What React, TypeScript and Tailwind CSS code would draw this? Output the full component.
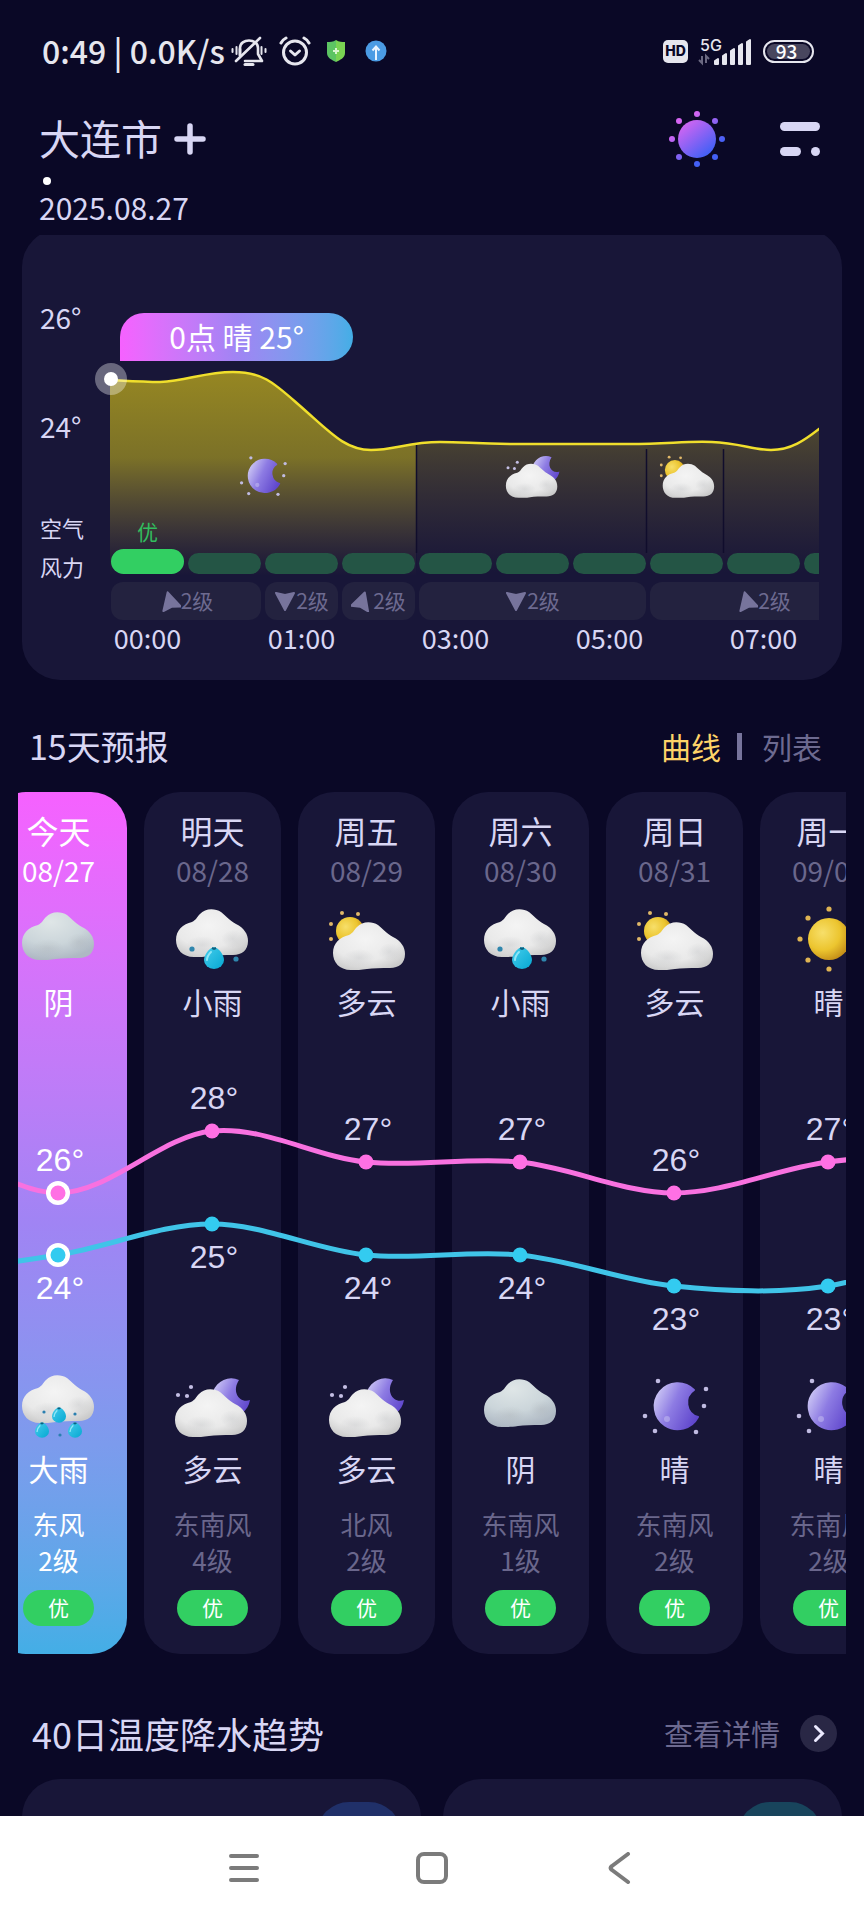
import React from 'react';

type Weather = 'overcast' | 'lightRain' | 'heavyRain' | 'partlySunny' | 'sunny' | 'cloudyNight' | 'clearNight';

interface Day {
  name: string;
  date: string;
  day: Weather;
  dayText: string;
  night: Weather;
  nightText: string;
  wind: string;
  level: string;
  high: number;
  low: number;
}

const days: Day[] = [
  { name: '今天', date: '08/27', day: 'overcast', dayText: '阴', night: 'heavyRain', nightText: '大雨', wind: '东风', level: '2级', high: 26, low: 24 },
  { name: '明天', date: '08/28', day: 'lightRain', dayText: '小雨', night: 'cloudyNight', nightText: '多云', wind: '东南风', level: '4级', high: 28, low: 25 },
  { name: '周五', date: '08/29', day: 'partlySunny', dayText: '多云', night: 'cloudyNight', nightText: '多云', wind: '北风', level: '2级', high: 27, low: 24 },
  { name: '周六', date: '08/30', day: 'lightRain', dayText: '小雨', night: 'overcast', nightText: '阴', wind: '东南风', level: '1级', high: 27, low: 24 },
  { name: '周日', date: '08/31', day: 'partlySunny', dayText: '多云', night: 'clearNight', nightText: '晴', wind: '东南风', level: '2级', high: 26, low: 23 },
  { name: '周一', date: '09/01', day: 'sunny', dayText: '晴', night: 'clearNight', nightText: '晴', wind: '东南风', level: '2级', high: 27, low: 23 },
];

const hours = ['00:00', '', '01:00', '', '03:00', '', '05:00', '', '07:00', ''];

const winds = [
  { span: 'col-span-2', angle: -15 },
  { span: 'col-span-1', angle: 180 },
  { span: 'col-span-1', angle: 18 },
  { span: 'col-span-3', angle: 180 },
  { span: 'col-span-3', angle: -15 },
];

const CLOUD =
  'M18 48C6 48 0 40 0 31C0 21 7 15 16 13C20 11 21 8 24 5C29-1 39-1 45 3C50 7 53 11 60 15C68 19 72 25 72 32C72 41 66 46 57 46C48 46 40 46 34 47C28 48 24 48 18 48Z';

// Gradients shared by every weather icon
const IconDefs = () => (
  <svg width="0" height="0" className="absolute" aria-hidden="true">
    <defs>
      <radialGradient id="cloudWhite" cx="0.45" cy="0.35" r="0.7">
        <stop offset="0" stopColor="#f4f4f4" />
        <stop offset="0.65" stopColor="#e9e9e9" />
        <stop offset="1" stopColor="#cacaca" />
      </radialGradient>
      <radialGradient id="cloudGrey" cx="0.4" cy="0.2" r="0.8">
        <stop offset="0" stopColor="#dfe6e7" />
        <stop offset="0.6" stopColor="#cbd5da" />
        <stop offset="1" stopColor="#aeb8c3" />
      </radialGradient>
      <radialGradient id="cloudShade">
        <stop offset="0" stopColor="#9a9da2" stopOpacity="0.2" />
        <stop offset="1" stopColor="#9a9da2" stopOpacity="0" />
      </radialGradient>
      <radialGradient id="sunFill" cx="0.35" cy="0.35" r="0.75">
        <stop offset="0" stopColor="#f7df6a" />
        <stop offset="0.55" stopColor="#ecc52f" />
        <stop offset="1" stopColor="#bd8414" />
      </radialGradient>
      <linearGradient id="moonFill" x1="0" y1="0.2" x2="1" y2="0.7">
        <stop offset="0" stopColor="#cfcaf5" />
        <stop offset="0.45" stopColor="#8d7be3" />
        <stop offset="1" stopColor="#5f46cc" />
      </linearGradient>
      <linearGradient id="dropFill" x1="0" y1="0" x2="1" y2="1">
        <stop offset="0" stopColor="#45cdec" />
        <stop offset="1" stopColor="#06a8d2" />
      </linearGradient>
    </defs>
  </svg>
);

const Cloud = ({ x, y, grey = false }: { x: number; y: number; grey?: boolean }) => (
  <g transform={`translate(${x} ${y})`}>
    <path d={CLOUD} fill={grey ? 'url(#cloudGrey)' : 'url(#cloudWhite)'} />
    <ellipse cx="26" cy="36" rx="16" ry="9" fill="url(#cloudShade)" />
    <ellipse cx="57" cy="30" rx="12" ry="9" fill="url(#cloudShade)" />
  </g>
);

const Drop = ({ x, y, s }: { x: number; y: number; s: number }) => (
  <g transform={`translate(${x} ${y}) scale(${s})`}>
    <path d="M0-11C5-10 10-3 10 2A10 9 0 0 1-10 2C-10-3-5-10 0-11Z" fill="url(#dropFill)" />
    <path d="M-3-6C-6-3-7 0-7 2" stroke="#8fe6f6" strokeWidth="2" fill="none" strokeLinecap="round" />
    <path d="M-2-10L0-9L2-10" stroke="#0d5f7d" strokeWidth="2" fill="none" />
  </g>
);

const Dots = ({ at, r, fill }: { at: number[][]; r: number; fill: string }) => (
  <>
    {at.map(([x, y]) => (
      <circle key={`${x}-${y}`} cx={x} cy={y} r={r} fill={fill} />
    ))}
  </>
);

const WeatherIcon = ({ type, className }: { type: Weather; className: string }) => (
  <svg viewBox="0 0 84 84" className={className} aria-hidden="true">
    {type === 'overcast' && <Cloud x={5} y={16} grey />}
    {type === 'lightRain' && (
      <>
        <Cloud x={5} y={13} />
        <Drop x={43} y={62} s={1} />
        <Dots at={[[21, 53], [65, 63]]} r={2.6} fill="#2f86ad" />
      </>
    )}
    {type === 'heavyRain' && (
      <>
        <Cloud x={5} y={12} />
        <Drop x={42} y={52} s={0.7} />
        <Drop x={25} y={67} s={0.7} />
        <Drop x={58} y={67} s={0.7} />
        <Dots at={[[27, 49], [58, 51], [43, 72]]} r={1.6} fill="#2a7fb0" />
      </>
    )}
    {type === 'partlySunny' && (
      <>
        <circle cx="25" cy="35" r="14" fill="url(#sunFill)" />
        <Dots at={[[6, 28], [17, 17], [33, 18], [6, 43]]} r={2} fill="#e0b868" />
        <Cloud x={8} y={26} />
      </>
    )}
    {type === 'sunny' && (
      <>
        <circle cx="42" cy="43" r="21" fill="url(#sunFill)" />
        <Dots at={[[42, 13], [21, 22], [13, 43], [21, 64], [42, 73], [63, 64], [71, 43], [63, 22]]} r={2.6} fill="#dfb453" />
      </>
    )}
    {type === 'cloudyNight' && (
      <>
        <path d="M68 17A19 19 0 1 0 79 37C69 41 60 29 68 17Z" fill="url(#moonFill)" />
        <Dots at={[[20, 24], [7, 32], [16, 33]]} r={2.1} fill="#c4bfe4" />
        <Cloud x={4} y={26} />
      </>
    )}
    {type === 'clearNight' && (
      <>
        <path d="M61 27A23 23 0 1 0 65 54A15 15 0 0 1 61 27Z" fill="url(#moonFill)" stroke="url(#moonFill)" strokeWidth="2" strokeLinejoin="round" />
        <circle cx="34" cy="56" r="3" fill="#c9c4f2" opacity="0.5" />
        <Dots at={[[25, 18], [73, 26], [71, 43], [12, 53], [22, 68], [63, 69]]} r={2.3} fill="#c0bbe2" />
      </>
    )}
  </svg>
);

const StatusBar = () => (
  <div className="flex h-[104px] items-center justify-between pl-[42px] pr-[50px] text-[#e6e6ee]">
    <div className="flex h-[102px] items-center self-start">
      <span className="pb-0.5 text-[32px] leading-10 font-medium">0:49 | 0.0K/s</span>
      <svg width="36" height="32" viewBox="0 0 36 32" fill="none" stroke="currentColor" strokeWidth="2.6" strokeLinecap="round" className="ml-1.5">
        <path d="M9 21V13C9 3 27 3 27 13V19L31 26H14" strokeLinejoin="round" />
        <path d="M5 26L29 3" />
        <path d="M9 14V20" />
        <path d="M14 29.500H22" strokeWidth="3" />
        <path d="M5.500 12V19M1.500 14V17M30.500 12V19M34.500 14V17" strokeWidth="2" />
      </svg>
      <svg width="32" height="30" viewBox="0 0 32 30" fill="none" stroke="currentColor" strokeWidth="3" strokeLinecap="round" className="ml-3">
        <circle cx="16" cy="16.500" r="11.500" />
        <path d="M11.500 15L16 19L20.500 15" strokeLinejoin="round" />
        <path d="M2 7C3 5 5 3 7 2M30 7C29 5 27 3 25 2" />
      </svg>
      <svg width="20" height="24" viewBox="0 0 20 24" className="ml-[15px]">
        <path d="M10 1C7 3 4 3 1 3V14C1 19 6 21 10 23Z" fill="#5cc463" />
        <path d="M10 1C13 3 16 3 19 3V14C19 19 14 21 10 23Z" fill="#79d352" />
        <path d="M10 9V15M7 12H13" stroke="#d8f5cf" strokeWidth="2" />
      </svg>
      <svg width="22" height="22" viewBox="0 0 22 22" className="ml-[19px]">
        <circle cx="11" cy="11" r="10.500" fill="#4b9be4" />
        <path d="M11 20V7M7.500 10.500L11 6.500L14.500 10.500" stroke="#e8f3ff" strokeWidth="2" fill="none" />
      </svg>
    </div>
    <div className="flex h-[102px] items-center self-start">
      <span className="flex h-[23px] w-[25px] items-center justify-center rounded-[5px] bg-[#e6e6ee] font-['Inter'] text-[14px] leading-4 font-extrabold text-[#0a0826]">
        HD
      </span>
      <svg width="54" height="36" viewBox="0 -4 54 36" className="ml-2.5">
        <text x="2" y="14" fill="#e6e6ee" fontSize="16" fontWeight="500" fontFamily="Inter, sans-serif">5G</text>
        <path d="M4 19V26L1 23M8 26V19L11 22" stroke="#6b6982" strokeWidth="2" fill="none" />
        <path d="M17 24L20 22V27H17ZM25 19L28 17V27H25ZM33 14L36 12V27H33ZM41 9L44 7V27H41ZM49 5L52 3V27H49Z" fill="#e6e6ee" stroke="#e6e6ee" strokeWidth="2" strokeLinejoin="round" />
      </svg>
      <span className="ml-[11px] flex h-[23px] w-[51px] rounded-full border-2 border-[#e6e6ee] p-0.5">
        <span className="flex w-full items-center justify-center rounded-full bg-[#48465e] pr-1 text-[19px] leading-4 font-medium text-white">93</span>
      </span>
    </div>
  </div>
);

const Header = () => (
  <header className="pl-[39px] pr-11">
    <div className="flex h-[70px] items-center justify-between">
      <h1 className="flex items-center text-[#d8d6f4]">
        <span className="pb-1 text-[41px] leading-[56px]">大连市</span>
        <button type="button" aria-label="添加城市" className="ml-3">
          <svg width="32" height="32" viewBox="0 0 32 32" stroke="currentColor" strokeWidth="5.500" strokeLinecap="round">
            <path d="M16 3V29M3 16H29" />
          </svg>
        </button>
      </h1>
      <div className="flex items-center">
        <button type="button" aria-label="天气主题">
          <svg width="60" height="60" viewBox="0 0 60 60">
            <defs>
              <linearGradient id="themeSun" x1="10" y1="8" x2="46" y2="52" gradientUnits="userSpaceOnUse">
                <stop offset="0.15" stopColor="#d565f2" />
                <stop offset="0.85" stopColor="#4360f6" />
              </linearGradient>
            </defs>
            <circle cx="30" cy="30" r="19" fill="url(#themeSun)" />
            <Dots at={[[30, 5], [12, 12], [48, 12], [5, 30], [55, 30], [12, 48], [48, 48], [30, 55]]} r={3} fill="url(#themeSun)" />
          </svg>
        </button>
        <button type="button" aria-label="菜单" className="ml-[53px] text-[#d8d6f4]">
          <svg width="40" height="34" viewBox="0 0 40 34" fill="currentColor">
            <rect width="40" height="9" rx="4.500" />
            <rect y="25" width="21" height="9" rx="4.500" />
            <circle cx="35.500" cy="29.500" r="4.500" />
          </svg>
        </button>
      </div>
    </div>
    <div className="ml-1 mt-[3px] h-2 w-2 rounded-full bg-white" />
    <p className="mt-1.5 text-[30px] leading-8 text-[#d8d6f4]">2025.08.27</p>
  </header>
);

const HOURLY_CURVE =
  'M1 19C20 20 35 21 51 21C78 20 95 11 124 11C154 11 165 22 190 44C222 72 236 89 262 89C285 89 300 81 331 81C355 81 370 83 411 83C465 83 480 83 520 83C560 83 575 80 603 81C630 82 645 89 662 89C682 89 696 79 710 68L750 40';

const HourlyCard = () => (
  <section className="mt-3 overflow-hidden px-[22px]">
    <div className="-mt-1.5 flex rounded-[38px] bg-[#181638] pb-6 pr-[23px]">
      <div className="w-[87px] shrink-0 pl-[18px] pt-[68px] text-[#d8d6f4]">
        <p className="text-[28px] leading-10">26°</p>
        <p className="mt-[69px] text-[28px] leading-10">24°</p>
        <p className="mt-[61px] text-[22px] leading-10">空气</p>
        <p className="text-[22px] leading-[38px]">风力</p>
      </div>
      <div className="min-w-0 flex-1 pt-[84px]">
        <p className="ml-[11px] h-12 w-[233px] rounded-3xl rounded-bl-none bg-linear-to-r from-[#f661ff] via-[#a084f4] to-[#43aee6] text-center text-[30px] leading-[46px] text-white">
          0点 晴 25°
        </p>
        <div className="relative">
          <div className="overflow-hidden">
            <div className="relative w-[770px]">
              <svg width="770" height="215" viewBox="0 0 770 215" className="absolute left-0 top-0" aria-hidden="true">
                <defs>
                  <linearGradient id="tempFill" x1="0" y1="11" x2="0" y2="215" gradientUnits="userSpaceOnUse">
                    <stop offset="0" stopColor="#f5dc12" stopOpacity="0.57" />
                    <stop offset="0.42" stopColor="#f0dc14" stopOpacity="0.46" />
                    <stop offset="0.75" stopColor="#d8c030" stopOpacity="0.2" />
                    <stop offset="1" stopColor="#c0a040" stopOpacity="0" />
                  </linearGradient>
                  <linearGradient id="tempFillDim" x1="0" y1="70" x2="0" y2="212" gradientUnits="userSpaceOnUse">
                    <stop offset="0" stopColor="#f0dc18" stopOpacity="0.24" />
                    <stop offset="1" stopColor="#c0a040" stopOpacity="0" />
                  </linearGradient>
                  <clipPath id="sunnyHours">
                    <rect width="307" height="215" />
                  </clipPath>
                  <clipPath id="otherHours">
                    <rect x="308" width="462" height="215" />
                  </clipPath>
                </defs>
                <path d={`${HOURLY_CURVE}V215H1Z`} fill="url(#tempFill)" clipPath="url(#sunnyHours)" />
                <path d={`${HOURLY_CURVE}V215H1Z`} fill="url(#tempFillDim)" clipPath="url(#otherHours)" />
                <path d="M307.500 84V192M537.500 88V192M614.500 88V192" stroke="#100d2c" strokeWidth="1.500" />
                <path d={HOURLY_CURVE} fill="none" stroke="#f0df2c" strokeWidth="2.500" />
              </svg>
              <div className="relative pl-0.5">
                <div className="grid grid-cols-[repeat(10,73px)] justify-items-center gap-1 pt-[84px]">
                  <div className="col-span-4">
                    <WeatherIcon type="clearNight" className="h-15 w-15" />
                  </div>
                  <div className="col-span-3">
                    <WeatherIcon type="cloudyNight" className="h-15 w-15" />
                  </div>
                  <WeatherIcon type="partlySunny" className="h-15 w-15" />
                </div>
                <p className="mb-1 mt-3 w-[73px] text-center text-[21px] leading-7 text-[#32bd5e]">优</p>
                <div className="grid h-[25px] grid-cols-[repeat(10,73px)] items-end gap-1">
                  {hours.map((_, i) => (
                    <div key={i} className={i === 0 ? 'h-[25px] rounded-full bg-[#32cf62]' : 'h-[21px] rounded-full bg-[#245545]'} />
                  ))}
                </div>
                <div className="mt-2 grid grid-cols-[repeat(10,73px)] gap-1">
                  {winds.map((w, i) => (
                    <div key={i} className={`${w.span} flex h-[38px] items-center justify-center rounded-xl bg-[#23223f] text-[21px] text-[#6d6a90]`}>
                      <svg width="22" height="22" viewBox="0 0 22 22" fill="#77749c" stroke="#77749c" strokeWidth="2" strokeLinejoin="round">
                        <path d="M11 2L20 19L11 17L2 19Z" transform={`rotate(${w.angle} 11 11)`} />
                      </svg>
                      2级
                    </div>
                  ))}
                </div>
                <div className="grid grid-cols-[repeat(10,73px)] justify-items-center gap-1 text-[27px] leading-9 text-[#d8d6f4]">
                  {hours.map((h, i) => (
                    <span key={i}>{h}</span>
                  ))}
                </div>
              </div>
            </div>
          </div>
          <span className="absolute -left-3.5 top-0.5 flex h-8 w-8 items-center justify-center rounded-full bg-white/35">
            <span className="h-3.5 w-3.5 rounded-full bg-white" />
          </span>
        </div>
      </div>
    </div>
  </section>
);

const PITCH = 154;

const highY = (t: number) => 143 + (26 - t) * 31;
const lowY = (t: number) => 205 + (24 - t) * 31;

// Catmull-Rom spline through evenly spaced points, starting one pitch before the first day
const spline = (ys: number[]) => {
  const x = (i: number) => 68 + (i - 1) * PITCH;
  const at = (i: number) => ys[Math.min(Math.max(i, 0), ys.length - 1)];
  let d = `M${x(0)} ${ys[0]}`;
  for (let i = 0; i < ys.length - 1; i++) {
    const c1 = at(i) + (at(i + 1) - at(i - 1)) / 6;
    const c2 = at(i + 1) - (at(i + 2) - at(i)) / 6;
    d += `C${x(i) + PITCH / 3} ${c1} ${x(i + 1) - PITCH / 3} ${c2} ${x(i + 1)} ${at(i + 1)}`;
  }
  return d;
};

const TempCurves = () => {
  const highs = [28, ...days.map((d) => d.high), 27.3].map(highY);
  const lows = [23.4, ...days.map((d) => d.low), 24.5].map(lowY);
  return (
    <svg width="908" height="300" viewBox="0 0 908 300" className="absolute left-0 top-[258px]">
      <path d={spline(highs)} fill="none" stroke="#f871e0" strokeWidth="5" />
      <path d={spline(lows)} fill="none" stroke="#40c4e8" strokeWidth="5" />
      {days.map((d, i) => {
        const x = 68 + i * PITCH;
        const today = i === 0;
        return (
          <g key={d.date} fill={today ? '#ffffff' : '#d8d6f4'} fontSize="32" textAnchor="middle" fontFamily="'Liberation Sans', sans-serif">
            {today && <circle cx={x} cy={highY(d.high)} r="12" />}
            {today && <circle cx={x} cy={lowY(d.low)} r="12" />}
            <circle cx={x} cy={highY(d.high)} r="7.500" fill="#ff70e4" />
            <circle cx={x} cy={lowY(d.low)} r="7.500" fill="#33cbf0" />
            <text x={x + 2} y={highY(d.high) - 22}>{d.high}°</text>
            <text x={x + 2} y={lowY(d.low) + 44}>{d.low}°</text>
          </g>
        );
      })}
    </svg>
  );
};

const DayColumn = ({ day, today }: { day: Day; today: boolean }) => (
  <div
    className={`flex w-[137px] shrink-0 flex-col items-center rounded-[36px] pb-7 pt-[18px] ${
      today ? 'bg-linear-to-b from-[#f661ff] via-[#a084f4] to-[#43aee6] text-white' : 'bg-[#181638] text-[#d8d6f4]'
    }`}
  >
    <p className="text-[32px] leading-10">{day.name}</p>
    <p className={`text-[28px] leading-10 ${today ? '' : 'text-[#6a678c]'}`}>{day.date}</p>
    <WeatherIcon type={day.day} className="mt-1.5 h-[84px] w-[84px]" />
    <p className="mt-px text-[30px] leading-10">{day.dayText}</p>
    <WeatherIcon type={day.night} className="mt-[342px] h-[84px] w-[84px]" />
    <p className="mt-px text-[30px] leading-10">{day.nightText}</p>
    <p className={`mt-[18px] text-[26px] leading-9 ${today ? '' : 'text-[#6a678c]'}`}>{day.wind}</p>
    <p className={`text-[26px] leading-9 ${today ? '' : 'text-[#6a678c]'}`}>{day.level}</p>
    <p className="mt-3 h-9 w-[71px] rounded-full bg-[#32cf62] text-center text-[21px] leading-[34px] text-white">优</p>
  </div>
);

const Forecast = () => (
  <section className="mt-11">
    <div className="flex h-11 items-center justify-between pl-[29px] pr-[42px]">
      <h2 className="text-[34px] leading-11 text-[#d8d6f4]">15天预报</h2>
      <div className="flex items-center text-[30px] leading-11">
        <button type="button" className="text-[#fdd368]">曲线</button>
        <span className="ml-4 mr-5 h-[27px] w-[5px] bg-[#77749c]" />
        <button type="button" className="text-[#6d6a90]">列表</button>
      </div>
    </div>
    <div className="mx-[18px] mt-6 overflow-hidden">
      <div className="relative -ml-7 flex w-max gap-[17px]">
        {days.map((d, i) => (
          <DayColumn key={d.date} day={d} today={i === 0} />
        ))}
        <TempCurves />
      </div>
    </div>
  </section>
);

const Trend = () => (
  <section className="mt-[57px]">
    <div className="flex h-11 items-center justify-between pl-8 pr-[27px]">
      <h2 className="text-[36px] leading-11 text-[#d8d6f4]">40日温度降水趋势</h2>
      <a href="#trend" className="flex items-center gap-5 text-[29px] leading-11 text-[#6d6a90]">
        查看详情
        <svg width="37" height="37" viewBox="0 0 37 37" fill="none">
          <circle cx="18.500" cy="18.500" r="18.500" fill="#292745" />
          <path d="M15.500 11.500L22.500 18.500L15.500 25.500" stroke="#eceaff" strokeWidth="3" strokeLinecap="round" />
        </svg>
      </a>
    </div>
    <div className="mt-6 grid grid-cols-2 gap-[22px] px-[22px]">
      <div className="flex h-[200px] justify-end rounded-[38px] bg-[#181638] px-5 pt-[23px]">
        <div className="h-[84px] w-[84px] rounded-[32px] bg-[#203069]" />
      </div>
      <div className="flex h-[200px] justify-end rounded-[38px] bg-[#181638] px-5 pt-[23px]">
        <div className="h-[84px] w-[84px] rounded-[32px] bg-[#18445c]" />
      </div>
    </div>
  </section>
);

const NavBar = () => (
  <nav className="flex h-26 shrink-0 items-center justify-center gap-39 bg-white text-[#7b7b7b]">
    <button type="button" aria-label="最近任务">
      <svg width="32" height="32" viewBox="0 0 32 32" stroke="currentColor" strokeWidth="4" strokeLinecap="round">
        <path d="M3 4H29M3 16H29M3 28H29" />
      </svg>
    </button>
    <button type="button" aria-label="主屏幕">
      <svg width="32" height="32" viewBox="0 0 32 32" fill="none" stroke="currentColor" strokeWidth="4">
        <rect x="2" y="2" width="28" height="28" rx="6" />
      </svg>
    </button>
    <button type="button" aria-label="返回">
      <svg width="32" height="32" viewBox="0 0 32 32" fill="none" stroke="currentColor" strokeWidth="4" strokeLinecap="round" strokeLinejoin="round">
        <path d="M24 2L8 14Q5 16 8 18L24 30" />
      </svg>
    </button>
  </nav>
);

const App: React.FC = () => {
  return (
    <div className="flex h-screen flex-col bg-[#0a0826] font-['Noto_Sans_CJK_SC',sans-serif]">
      <IconDefs />
      <main className="min-h-0 flex-1 overflow-y-auto [scrollbar-width:none]">
        <StatusBar />
        <Header />
        <HourlyCard />
        <Forecast />
        <Trend />
      </main>
      <NavBar />
    </div>
  );
};

export default App;
